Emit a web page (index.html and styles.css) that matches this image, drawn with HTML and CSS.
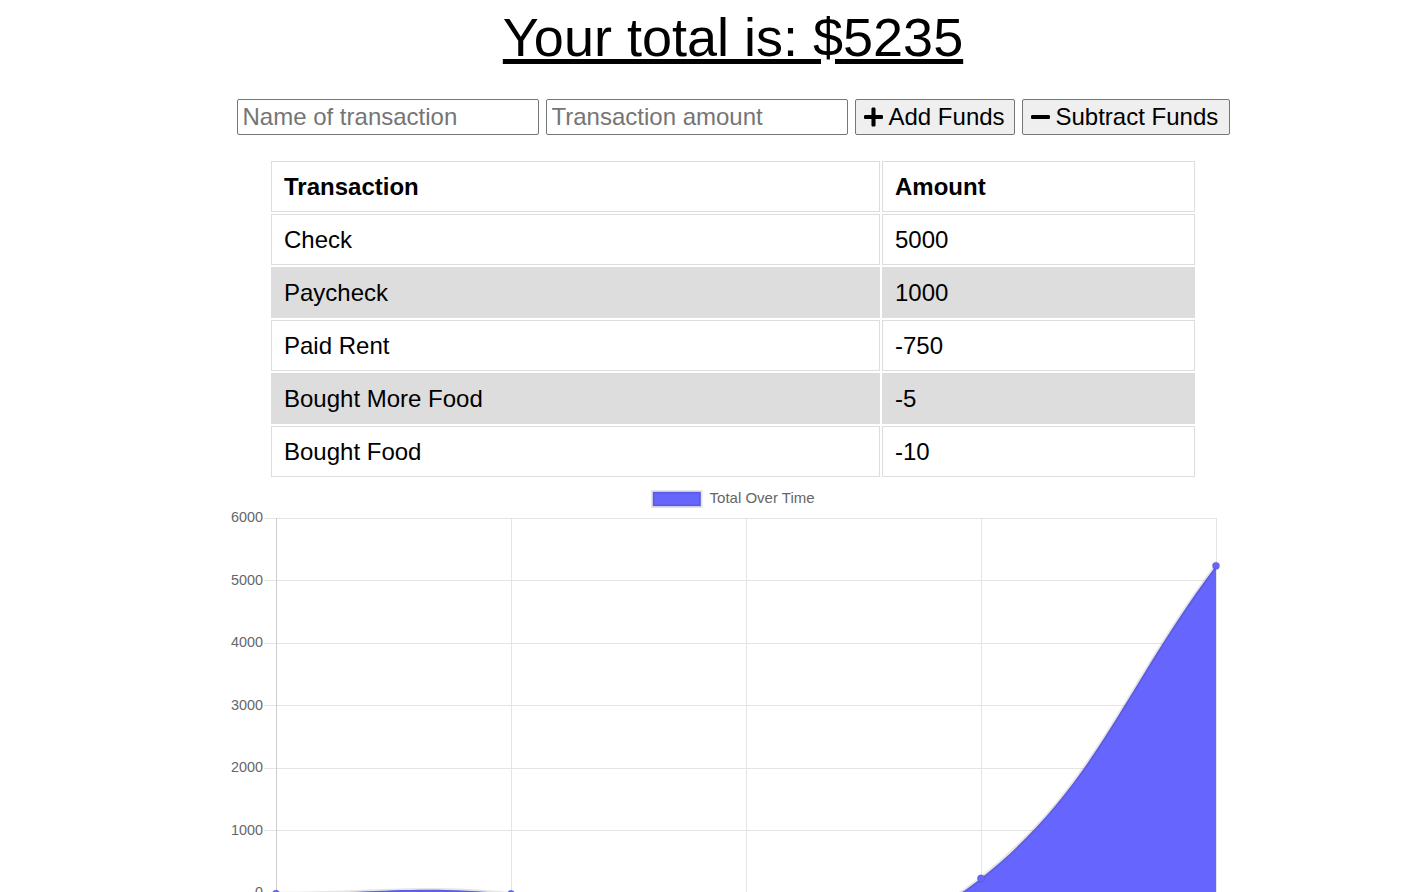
FILE: index.html
```html
<!DOCTYPE html>
<html lang="en">
<head>
<meta charset="utf-8">
<title>Budget Tracker</title>
<link rel="stylesheet" href="styles.css">
</head>
<body>
<div class="page">
  <h1 class="total">Your total is: $<span class="total-value">5235</span></h1>

  <form class="entry">
    <input class="field" type="text" placeholder="Name of transaction">
    <input class="field" type="number" placeholder="Transaction amount">
    <button class="btn btn-add" type="button">
      <svg class="icon" viewBox="0 0 448 512" aria-hidden="true"><path d="M416 208H272V64c0-17.67-14.33-32-32-32h-32c-17.67 0-32 14.33-32 32v144H32c-17.67 0-32 14.33-32 32v32c0 17.67 14.33 32 32 32h144v144c0 17.67 14.33 32 32 32h32c17.67 0 32-14.33 32-32V304h144c17.670 0 32-14.33 32-32v-32c0-17.67-14.33-32-32-32z"/></svg>
      <span>Add Funds</span>
    </button>
    <button class="btn btn-sub" type="button">
      <svg class="icon" viewBox="0 0 448 512" aria-hidden="true"><path d="M416 208H32c-17.67 0-32 14.33-32 32v32c0 17.67 14.33 32 32 32h384c17.67 0 32-14.33 32-32v-32c0-17.67-14.33-32-32-32z"/></svg>
      <span>Subtract Funds</span>
    </button>
  </form>

  <table class="ledger">
    <thead>
      <tr><th class="col-name">Transaction</th><th class="col-amount">Amount</th></tr>
    </thead>
    <tbody>
      <tr><td>Check</td><td>5000</td></tr>
      <tr class="alt"><td>Paycheck</td><td>1000</td></tr>
      <tr><td>Paid Rent</td><td>-750</td></tr>
      <tr class="alt"><td>Bought More Food</td><td>-5</td></tr>
      <tr><td>Bought Food</td><td>-10</td></tr>
    </tbody>
  </table>

  <svg class="chart" viewBox="200 480 1066 420" width="1066" height="420" aria-label="Total Over Time chart">
    <g class="legend">
      <rect x="652.8" y="491.8" width="48" height="14.4" fill="#6666ff" stroke="rgba(0,0,0,0.1)" stroke-width="3.6"/>
      <text x="709.6" y="499" class="chart-text legend-text" dominant-baseline="middle">Total Over Time</text>
    </g>
    <g class="grid" stroke="#e4e4e4" stroke-width="1">
      <line x1="264" y1="518.5" x2="1216" y2="518.5"/>
      <line x1="264" y1="580.5" x2="1216" y2="580.5"/>
      <line x1="264" y1="643.5" x2="1216" y2="643.5"/>
      <line x1="264" y1="705.5" x2="1216" y2="705.5"/>
      <line x1="264" y1="768.5" x2="1216" y2="768.5"/>
      <line x1="264" y1="830.5" x2="1216" y2="830.5"/>
      <line x1="264" y1="893.5" x2="1216" y2="893.5" stroke="#c4c4c4"/>
      <line x1="276.5" y1="518" x2="276.5" y2="920" stroke="#cdcdcd"/>
      <line x1="511.5" y1="518" x2="511.5" y2="920"/>
      <line x1="746.5" y1="518" x2="746.5" y2="920"/>
      <line x1="981.5" y1="518" x2="981.5" y2="920"/>
      <line x1="1216.5" y1="518" x2="1216.5" y2="920"/>
    </g>
    <g class="ticks chart-text" text-anchor="end" dominant-baseline="middle">
      <text x="263" y="518.5">6000</text>
      <text x="263" y="581">5000</text>
      <text x="263" y="643.5">4000</text>
      <text x="263" y="706">3000</text>
      <text x="263" y="768.5">2000</text>
      <text x="263" y="831">1000</text>
      <text x="263" y="893.5">0</text>
    </g>
    <path class="area" d="M276,893.625 C370,893.75 417.92,884.59 511,893.9375 C605.92,903.47 652.69,943.91 746,940.8125 C840.69,937.66 908.91,935.83 981,878.3125 C1096.91,785.83 1122,690.81 1216,565.8125 L1216,893 L276,893 Z"/>
    <path class="line" d="M276,893.625 C370,893.75 417.92,884.59 511,893.9375 C605.92,903.47 652.69,943.91 746,940.8125 C840.69,937.66 908.91,935.83 981,878.3125 C1096.91,785.83 1122,690.81 1216,565.8125"/>
    <g class="points">
      <circle cx="276" cy="893.6" r="3.6"/>
      <circle cx="511" cy="893.9" r="3.6"/>
      <circle cx="746" cy="940.8" r="3.6"/>
      <circle cx="981" cy="878.3" r="3.6"/>
      <circle cx="1216" cy="565.8" r="3.6"/>
    </g>
  </svg>
</div>
</body>
</html>
```

FILE: styles.css
```css
* {
  box-sizing: border-box;
}

html, body {
  margin: 0;
  padding: 0;
  background: #ffffff;
}

body {
  font-family: "Liberation Sans", Arial, Helvetica, sans-serif;
  color: #000000;
}

.page {
  padding-left: 38px;
  display: flex;
  flex-direction: column;
  align-items: center;
}

.total {
  margin: 6px 0 0;
  font-size: 54px;
  font-weight: normal;
  line-height: 62px;
  text-decoration: underline;
  text-align: center;
}

.entry {
  margin-top: 31px;
  display: flex;
  gap: 7px;
  height: 36px;
}

.field {
  width: 302px;
  height: 36px;
  padding: 1px 5px;
  border: 1px solid #767676;
  border-radius: 2px;
  font-family: inherit;
  font-size: 24px;
  color: #000;
  background: #fff;
  -moz-appearance: textfield;
}

.field::-webkit-outer-spin-button,
.field::-webkit-inner-spin-button {
  -webkit-appearance: none;
  margin: 0;
}

.field::placeholder {
  color: #757575;
}

.btn {
  height: 36px;
  display: flex;
  align-items: center;
  justify-content: flex-start;
  gap: 6px;
  padding: 0 8px;
  border: 1px solid #767676;
  border-radius: 2px;
  background: #efefef;
  font-family: inherit;
  font-size: 24px;
  color: #000;
  white-space: nowrap;
  cursor: pointer;
}

.btn-add {
  width: 160px;
}

.btn-sub {
  width: 208px;
}

.icon {
  width: 19px;
  height: 22px;
  fill: #000;
  flex: none;
}

.ledger {
  margin-top: 24px;
  width: 928px;
  border-collapse: separate;
  border-spacing: 2px;
  font-size: 24px;
}

.ledger th,
.ledger td {
  border: 1px solid #dddddd;
  padding: 11px 12px;
  line-height: 27px;
  text-align: left;
  vertical-align: middle;
}

.ledger th {
  font-weight: bold;
}

.col-name {
  width: 609px;
}

.col-amount {
  width: 313px;
}

.ledger .alt td {
  background: #dddddd;
}

.chart {
  display: block;
  margin-top: 1px;
  flex: none;
}

.chart-text {
  font-family: "Liberation Sans", Arial, Helvetica, sans-serif;
  font-size: 14.4px;
  fill: #666666;
}

.legend-text {
  font-size: 15px;
}

.area {
  fill: #6666ff;
}

.line {
  fill: none;
  stroke: rgba(0, 0, 0, 0.1);
  stroke-width: 3.6;
}

.points circle {
  fill: #6666ff;
  stroke: rgba(0, 0, 0, 0.1);
  stroke-width: 1.2;
}
```
